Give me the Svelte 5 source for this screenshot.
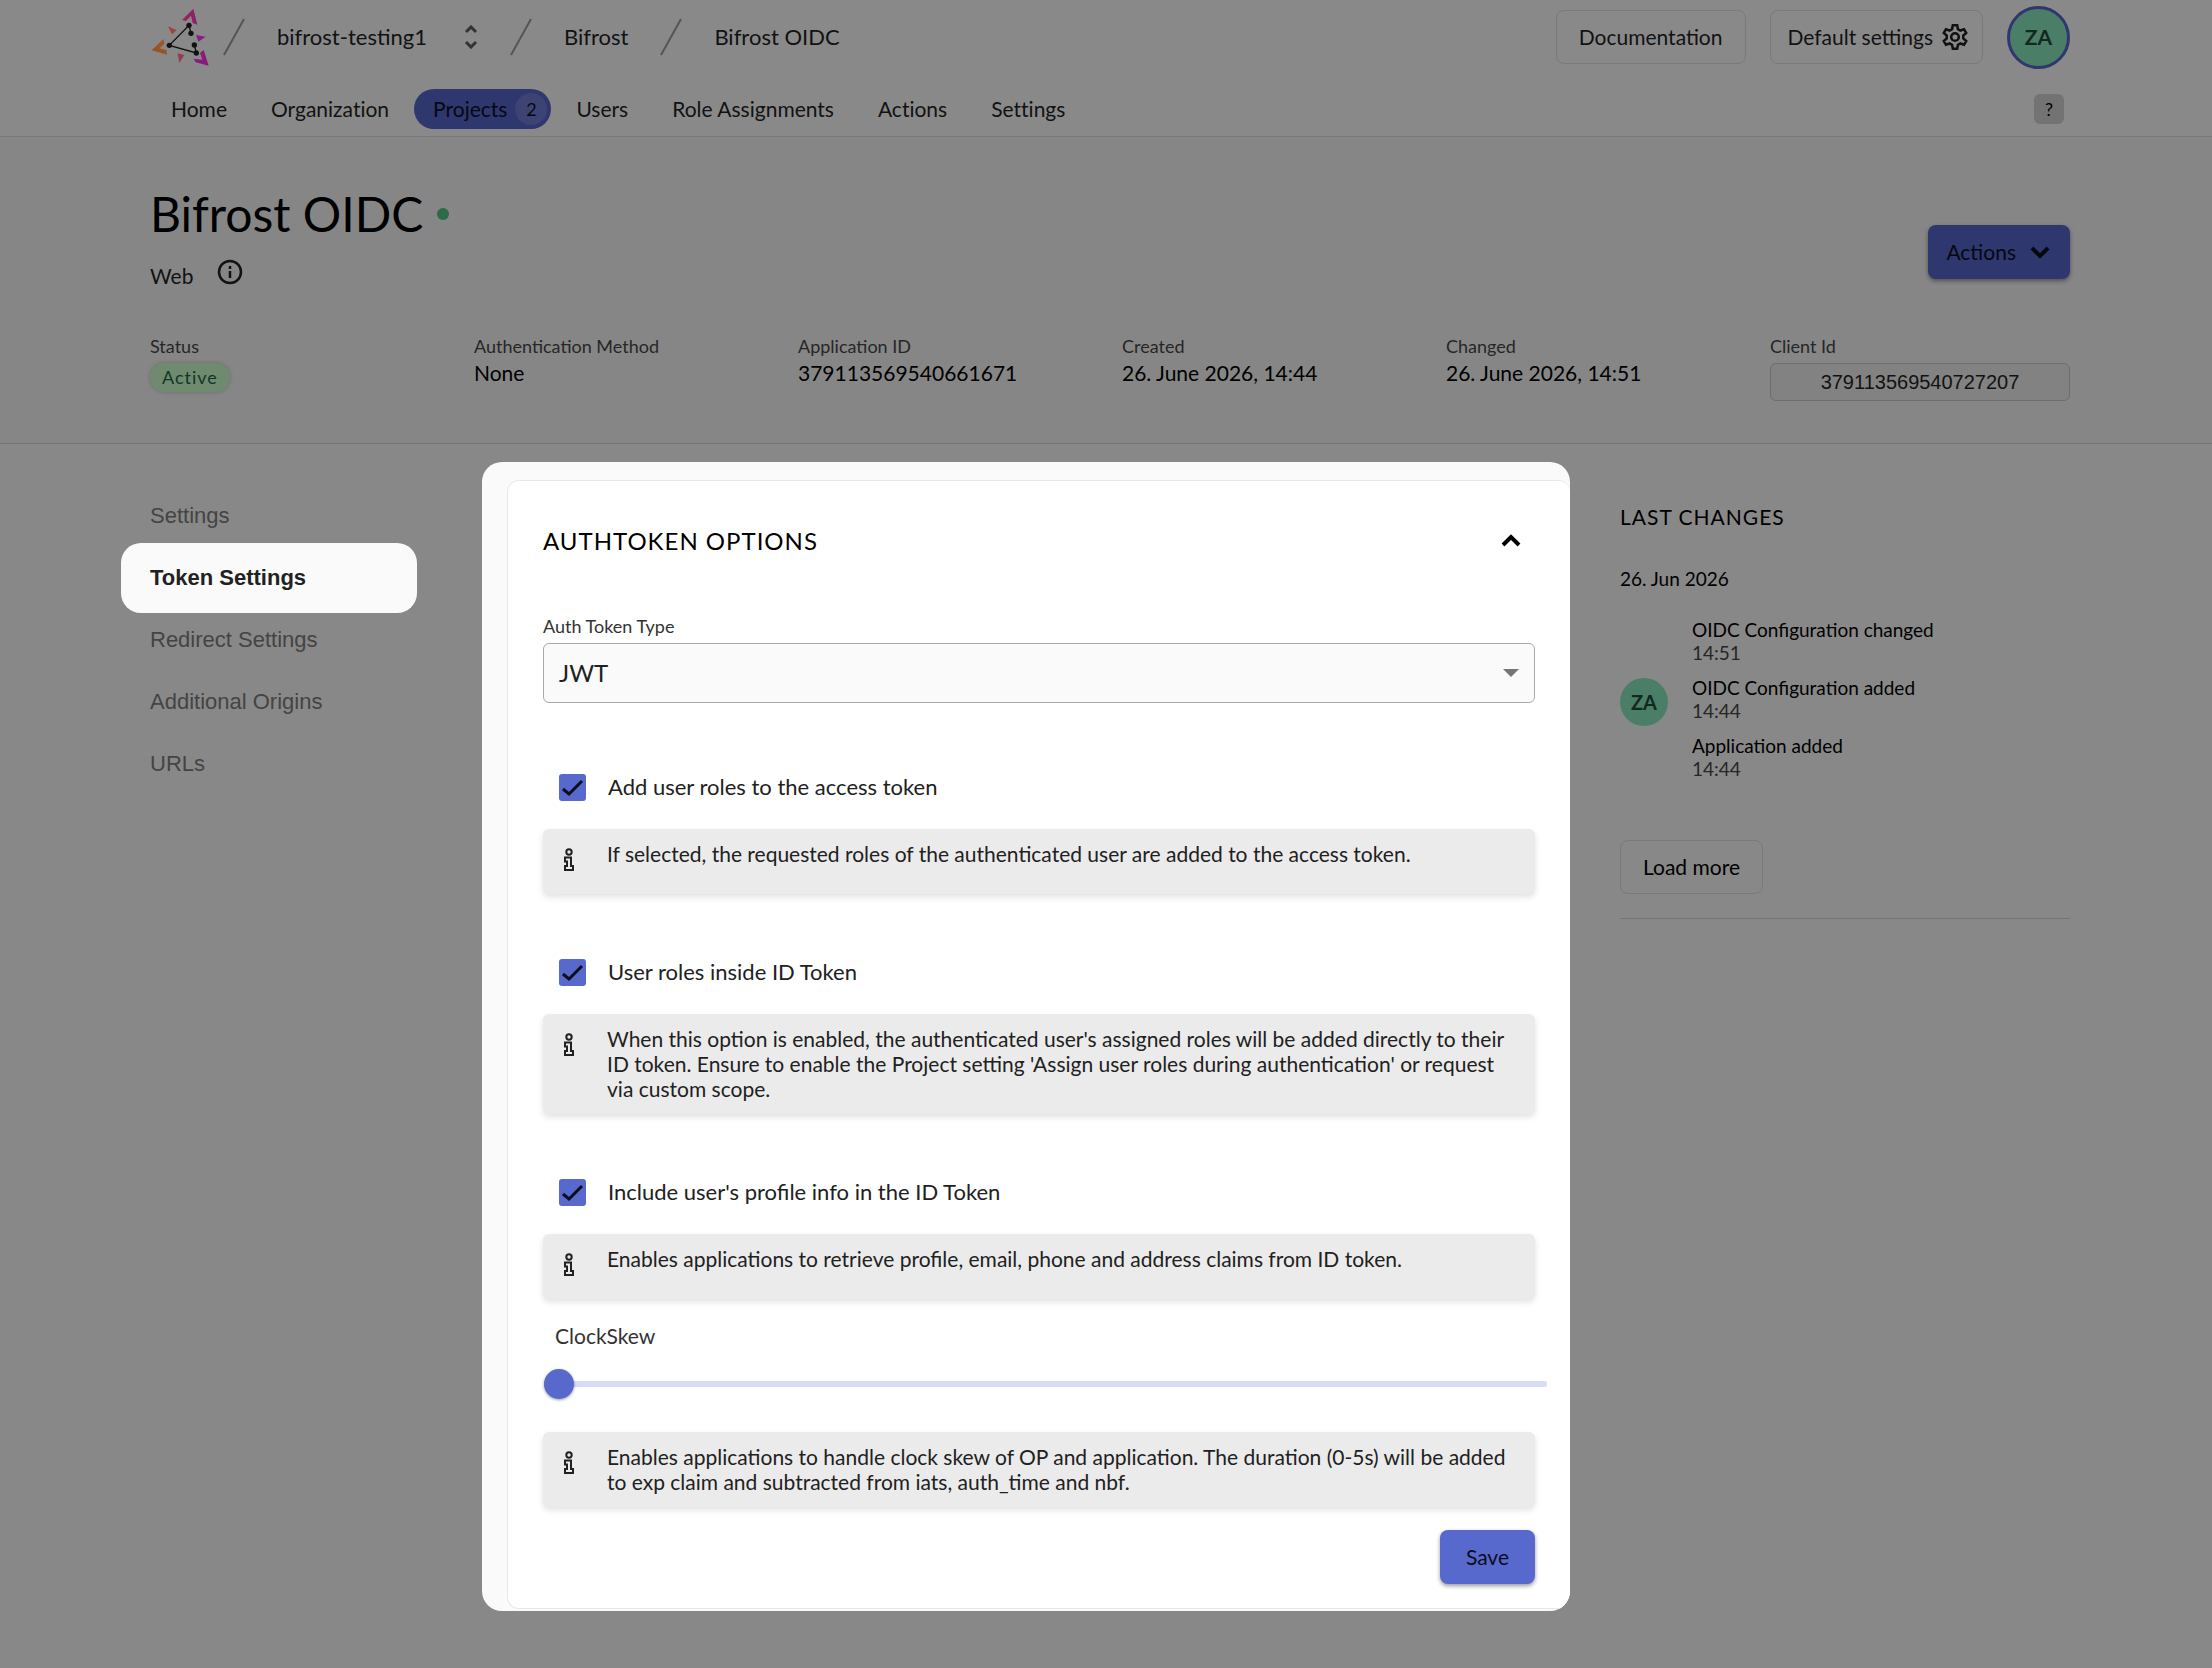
<script>
  const menu = [
    { name: 'Home' },
    { name: 'Organization' },
    { name: 'Projects', count: 2, active: true },
    { name: 'Users' },
    { name: 'Role Assignments' },
    { name: 'Actions' },
    { name: 'Settings' }
  ]

  const details = [
    { label: 'Authentication Method', value: 'None' },
    { label: 'Application ID', value: '379113569540661671' },
    { label: 'Created', value: '26. June 2026, 14:44' },
    { label: 'Changed', value: '26. June 2026, 14:51' }
  ]

  const sections = ['Settings', 'Token Settings', 'Redirect Settings', 'Additional Origins', 'URLs']
  let currentSection = $state('Token Settings')

  let options = $state([
    {
      id: 'access-roles',
      label: 'Add user roles to the access token',
      info: 'If selected, the requested roles of the authenticated user are added to the access token.',
      checked: true
    },
    {
      id: 'id-roles',
      label: 'User roles inside ID Token',
      info: "When this option is enabled, the authenticated user's assigned roles will be added directly to their ID token. Ensure to enable the Project setting 'Assign user roles during authentication' or request via custom scope.",
      checked: true
    },
    {
      id: 'id-profile',
      label: "Include user's profile info in the ID Token",
      info: 'Enables applications to retrieve profile, email, phone and address claims from ID token.',
      checked: true
    }
  ])

  const changes = [
    { text: 'OIDC Configuration changed', time: '14:51' },
    { text: 'OIDC Configuration added', time: '14:44' },
    { text: 'Application added', time: '14:44' }
  ]

  let tokenType = $state('JWT')
  let clockSkew = $state(0)
</script>

{#snippet slash()}
  <svg class="slash" width="22" height="38" viewBox="0 0 22 38" aria-hidden="true">
    <path d="M1 37 21 1" />
  </svg>
{/snippet}

{#snippet note(text)}
  <div class="note">
    <svg width="12" height="24" viewBox="0 0 12 24" aria-hidden="true">
      <circle cx="6" cy="4" r="2.7" />
      <path d="M2 9.500h6v8.500h2v4H2v-4h2v-4.500H2z" />
    </svg>
    <p>{text}</p>
  </div>
{/snippet}

<header class="header">
  <div class="top-row">
    <a class="logo" href="#home" aria-label="Home">
      <svg width="60" height="60" viewBox="30 21 180 180">
        <defs>
          <linearGradient id="warm" x1="0" y1="1" x2="1" y2="0">
            <stop offset="0" stop-color="#8d5520" />
            <stop offset="1" stop-color="#a3552c" />
          </linearGradient>
          <linearGradient id="pink" x1="0" y1="0" x2="1" y2="0">
            <stop offset="0" stop-color="#94294f" />
            <stop offset="1" stop-color="#8c1d72" />
          </linearGradient>
        </defs>
        <path fill="url(#pink)" d="M160 26 126 60l12 3 15-16 5 22 14 5z" />
        <path fill="url(#warm)" d="m35 151 35-34 3 14-14 14 21 6 1 13z" />
        <path fill="#8a1a7c" d="m206 197-15-47-11 9 7 20-26-3 6 11z" />
        <path fill="#9a4540" d="m84 79 26 12-14 12z" />
        <path fill="#8a1d80" d="m168 105 29 5-22 15z" />
        <path fill="#963a50" d="m113 160 20 5-15 24z" />
        <path fill="none" stroke="#111" stroke-width="4" d="m153 100-6-24-59 60 81 23-6-24" />
        <g fill="#111">
          <circle cx="147" cy="76" r="8" />
          <circle cx="153" cy="100" r="8" />
          <circle cx="88" cy="136" r="8" />
          <circle cx="163" cy="135" r="8" />
          <circle cx="169" cy="159" r="8" />
        </g>
      </svg>
    </a>
    <nav class="crumbs" aria-label="Breadcrumb">
      {@render slash()}
      <button class="org">
        bifrost-testing1
        <svg width="14" height="24" viewBox="0 0 14 24" aria-hidden="true">
          <path d="m2 7 5-5 5 5M2 17l5 5 5-5" />
        </svg>
      </button>
      {@render slash()}
      <a href="#bifrost">Bifrost</a>
      {@render slash()}
      <a href="#oidc">Bifrost OIDC</a>
    </nav>
    <div class="tools">
      <a class="stroked" href="#docs">Documentation</a>
      <button class="stroked settings">
        Default settings
        <svg width="28" height="28" viewBox="1 0 22 22" aria-hidden="true">
          <path d="M10.300 1.800h3.400l.6 3 1.900 1.100 2.900-1 1.700 3-2.300 2v2.200l2.300 2-1.700 3-2.900-1-1.900 1.100-.6 3h-3.400l-.6-3-1.900-1.100-2.900 1-1.700-3 2.300-2v-2.200l-2.300-2 1.700-3 2.900 1 1.900-1.100z" />
          <circle cx="12" cy="11" r="3" />
        </svg>
      </button>
      <button class="avatar me">ZA</button>
    </div>
  </div>

  <div class="nav-row">
    <nav class="menu" aria-label="Main">
      {#each menu as item}
        <a href="#{item.name}" class:active={item.active}>
          {item.name}
          {#if item.count}<span class="count">{item.count}</span>{/if}
        </a>
      {/each}
    </nav>
    <button class="help">?</button>
  </div>
</header>

<section class="app-info">
  <div class="app-head">
    <div>
      <h1>Bifrost OIDC <span class="dot"></span></h1>
      <div class="app-type">
        <span>Web</span>
        <a href="#info" aria-label="Info">
          <svg width="28" height="28" viewBox="0 0 28 28">
            <circle cx="14" cy="14" r="11" />
            <path d="M14 13v7M14 8v3" />
          </svg>
        </a>
      </div>
    </div>
    <button class="raised actions">
      Actions
      <svg width="20" height="14" viewBox="0 0 20 14" aria-hidden="true">
        <path d="m2 3 8 8 8-8" />
      </svg>
    </button>
  </div>

  <dl class="details">
    <div>
      <dt>Status</dt>
      <dd><span class="state">Active</span></dd>
    </div>
    {#each details as { label, value }}
      <div>
        <dt>{label}</dt>
        <dd>{value}</dd>
      </div>
    {/each}
    <div>
      <dt>Client Id</dt>
      <dd><button class="client-id">379113569540727207</button></dd>
    </div>
  </dl>
</section>

<main class="content">
  <nav class="sidenav" aria-label="Application">
    {#each sections as section}
      <button class:active={section === currentSection} onclick={() => (currentSection = section)}>
        {section}
      </button>
    {/each}
  </nav>

  <div class="spotlight">
    <form class="card" onsubmit={(e) => e.preventDefault()}>
      <div class="card-head">
        <h2>AUTHTOKEN OPTIONS</h2>
        <button type="button" class="collapse" aria-label="Collapse">
          <svg width="20" height="14" viewBox="0 0 20 14">
            <path d="m2 11 8-8 8 8" />
          </svg>
        </button>
      </div>

      <label class="field-label" for="token-type">Auth Token Type</label>
      <div class="select">
        <select id="token-type" bind:value={tokenType}>
          <option>JWT</option>
          <option>Bearer Token</option>
        </select>
        <svg width="16" height="8" viewBox="0 0 16 8" aria-hidden="true">
          <path d="M0 0h16L8 8z" />
        </svg>
      </div>

      {#each options as option}
        <label class="check" for={option.id}>
          <span class="box">
            <input type="checkbox" id={option.id} bind:checked={option.checked} />
            {#if option.checked}
              <svg width="27" height="27" viewBox="0 0 27 27" aria-hidden="true">
                <path d="m4 15 6 5L23 7" />
              </svg>
            {/if}
          </span>
          {option.label}
        </label>
        {@render note(option.info)}
      {/each}

      <label class="skew-label" for="clock-skew">ClockSkew</label>
      <input class="slider" type="range" id="clock-skew" min="0" max="5" bind:value={clockSkew} />
      {@render note('Enables applications to handle clock skew of OP and application. The duration (0-5s) will be added to exp claim and subtracted from iats, auth_time and nbf.')}

      <button class="raised save">Save</button>
    </form>
  </div>

  <aside class="changes">
    <h3>LAST CHANGES</h3>
    <p class="date">26. Jun 2026</p>
    <div class="group">
      <span class="avatar">ZA</span>
      <ul>
        {#each changes as change}
          <li>
            <span>{change.text}</span>
            <time>{change.time}</time>
          </li>
        {/each}
      </ul>
    </div>
    <button class="stroked">Load more</button>
  </aside>
</main>

<style>
:global(body) {
  background: #888888;
  color: #121212;
  font: 21px/28px Lato, "Liberation Sans", sans-serif;
}

h1, h2, h3, p, dl, dd, ul {
  margin: 0;
  padding: 0;
  font-weight: 400;
}

a {
  color: inherit;
  text-decoration: none;
}

button {
  padding: 0;
  border: 0;
  background: none;
  color: inherit;
  font: inherit;
  cursor: pointer;
}

svg {
  display: block;
  flex: none;
}

.stroked,
.raised {
  display: inline-flex;
  align-items: center;
  justify-content: center;
  box-sizing: border-box;
  height: 54px;
  border-radius: 8px;
}

.stroked {
  padding: 0 22px;
  border: 1px solid #7a7a7a;
}

.avatar {
  display: flex;
  align-items: center;
  justify-content: center;
  flex: none;
  box-sizing: border-box;
  width: 48px;
  height: 48px;
  border-radius: 50%;
  background: #4b7e66;
  color: #12291f;
  font-size: 20px;
  font-weight: 700;
}

/* header */

.header {
  border-bottom: 1px solid #777777;
  background: #898989;
}

.top-row {
  display: flex;
  align-items: center;
  height: 74px;
  padding: 0 142px 0 150px;
}

.logo {
  margin-right: 13px;
}

.crumbs {
  display: flex;
  align-items: center;
  gap: 32px;
  font-size: 22px;
}

.slash {
  fill: none;
  stroke: #555555;
  stroke-width: 2;
}

.org {
  display: flex;
  align-items: center;
  gap: 37px;
}

.org svg {
  fill: none;
  stroke: #333333;
  stroke-width: 3;
}

.tools {
  display: flex;
  align-items: center;
  gap: 24px;
  margin-left: auto;
}

.settings {
  gap: 8px;
  padding: 0 13px 0 17px;
}

.settings svg {
  fill: none;
  stroke: #121212;
  stroke-width: 2;
}

.avatar.me {
  width: 63px;
  height: 63px;
  border: 3px solid #30376f;
  font-size: 21px;
}

.nav-row {
  display: flex;
  align-items: center;
  justify-content: space-between;
  padding: 15px 148px 7px 152px;
}

.menu {
  display: flex;
  gap: 6px;
  font-variant-ligatures: none;
}

.menu a {
  display: flex;
  align-items: center;
  gap: 8px;
  height: 40px;
  padding: 0 19px;
  border-radius: 20px;
}

.menu .active {
  padding-right: 4px;
  background: #2f376f;
  color: #060810;
}

.count {
  width: 32px;
  border-radius: 16px;
  background: #3d4474;
  font-size: 18px;
  line-height: 32px;
  text-align: center;
}

.help {
  width: 30px;
  height: 30px;
  border-radius: 6px;
  background: #737373;
  color: #000000;
  font-size: 18px;
}

/* application summary */

.app-info {
  padding: 47px 142px 42px 150px;
  border-bottom: 1px solid #757575;
  background: #868686;
}

.app-head {
  display: flex;
  align-items: flex-start;
  justify-content: space-between;
}

h1 {
  display: flex;
  align-items: center;
  gap: 14px;
  color: #000000;
  font-size: 48px;
  line-height: 60px;
}

.dot {
  width: 12px;
  height: 12px;
  border-radius: 50%;
  background: #2d6a49;
}

.app-type {
  display: flex;
  gap: 23px;
  margin-top: 12px;
  line-height: 40px;
}

.app-type a {
  padding-top: 2px;
}

.app-type svg {
  fill: none;
  stroke: #121212;
  stroke-width: 2.5;
}

.raised {
  background: #5769cd;
  color: #0b0e1c;
  box-shadow: 0 2px 4px rgba(0, 0, 0, 0.4);
}

.raised.actions {
  gap: 14px;
  margin-top: 41px;
  padding: 0 20px 0 18px;
  background: #2f376f;
  color: #060810;
}

.actions svg {
  fill: none;
  stroke: currentColor;
  stroke-width: 4;
}

.details {
  display: grid;
  grid-template-columns: repeat(6, 1fr);
  gap: 24px;
  margin-top: 37px;
}

dt {
  color: #262626;
  font-size: 18px;
  line-height: 26px;
}

dd {
  color: #000000;
}

.state {
  display: block;
  width: fit-content;
  margin-top: 4px;
  padding: 0 12px;
  border-radius: 15px;
  background: #6f8a6e;
  box-shadow: 0 0 4px rgba(0, 0, 0, 0.2);
  color: #12352a;
  font-size: 18px;
  line-height: 29px;
  letter-spacing: 1px;
}

.client-id {
  display: block;
  width: 100%;
  height: 38px;
  margin-top: 4px;
  border: 1px solid #6c6d70;
  border-radius: 6px;
  background: #828282;
  color: #121212;
  font-family: "Liberation Sans", Arial, sans-serif;
  font-size: 20px;
}

/* main area */

.content {
  display: grid;
  grid-template-columns: 296px 1fr 450px;
  align-items: start;
  padding: 18px 142px 56px 121px;
}

.sidenav {
  display: flex;
  flex-direction: column;
  padding-top: 23px;
}

.sidenav button {
  height: 62px;
  padding: 0 29px;
  color: #444444;
  font-family: "Liberation Sans", Arial, sans-serif;
  font-size: 22px;
  text-align: left;
}

.sidenav .active {
  height: 70px;
  margin: -4px 0;
  border-radius: 20px;
  background: #fafafa;
  color: #212121;
  font-weight: 700;
}

.spotlight {
  margin: 0 50px 0 65px;
  padding: 18px 0 2px 25px;
  border-radius: 20px;
  background: #fafafa;
  overflow: hidden;
}

.card {
  display: flex;
  flex-direction: column;
  padding: 30px 35px 24px;
  border: 1px solid #e8e8e8;
  border-right: 0;
  border-radius: 12px;
  background: #ffffff;
}

.card-head {
  display: flex;
  align-items: center;
  justify-content: space-between;
  height: 60px;
  margin-bottom: 43px;
  padding-right: 14px;
}

h2 {
  color: #000000;
  font-size: 24px;
  letter-spacing: 1px;
}

.collapse svg {
  fill: none;
  stroke: #000000;
  stroke-width: 4;
}

.field-label {
  margin-bottom: 5px;
  color: #333333;
  font-size: 18px;
  line-height: 24px;
}

.select {
  display: grid;
  align-items: center;
  margin-bottom: 6px;
}

.select select,
.select svg {
  grid-area: 1 / 1;
}

.select select {
  height: 60px;
  padding: 0 15px;
  border: 1px solid #a9a9a9;
  border-radius: 6px;
  background: #fafafa;
  color: #212121;
  font: inherit;
  font-size: 24px;
  appearance: none;
}

.select svg {
  justify-self: end;
  margin-right: 16px;
  fill: #757575;
  pointer-events: none;
}

.check {
  display: flex;
  align-items: center;
  gap: 22px;
  height: 40px;
  margin: 58px 0 22px;
  padding-left: 16px;
  color: #212121;
  font-size: 22px;
}

.box {
  display: grid;
}

.box input,
.box svg {
  grid-area: 1 / 1;
}

.box input {
  width: 27px;
  height: 27px;
  margin: 0;
  border: 2px solid #757575;
  border-radius: 3px;
  appearance: none;
}

.box input:checked {
  border-color: #5769cd;
  background: #5769cd;
}

.box svg {
  fill: none;
  stroke: #0b0e1c;
  stroke-width: 3;
  pointer-events: none;
}

.note {
  display: flex;
  gap: 32px;
  min-height: 40px;
  padding: 12px 24px 13px 20px;
  border-radius: 6px;
  background: #ebebeb;
  box-shadow: 0 3px 6px rgba(0, 0, 0, 0.12);
  color: #212121;
  line-height: 25px;
}

.note svg {
  margin-top: 7px;
  fill: none;
  stroke: #212121;
  stroke-width: 2;
}

.skew-label {
  margin-top: 22px;
  padding-left: 12px;
  color: #333333;
  line-height: 30px;
}

.slider {
  height: 30px;
  margin: 18px -12px 33px 1px;
  background: none;
  appearance: none;
}

.slider::-webkit-slider-runnable-track {
  height: 6px;
  border-radius: 3px;
  background: #d7dbf4;
}

.slider::-webkit-slider-thumb {
  width: 30px;
  height: 30px;
  margin-top: -12px;
  border-radius: 50%;
  background: #5769cd;
  box-shadow: 0 1px 3px rgba(0, 0, 0, 0.4);
  appearance: none;
}

.save {
  align-self: flex-end;
  margin-top: 23px;
  padding: 0 26px;
}

/* last changes */

.changes {
  padding: 40px 0 24px;
  border-bottom: 1px solid #757575;
  color: #000000;
}

h3 {
  font-size: 21px;
  line-height: 30px;
  letter-spacing: 1px;
}

.date {
  margin: 35px 0 24px;
  font-size: 19px;
  line-height: 24px;
}

.group {
  display: flex;
  align-items: center;
  gap: 24px;
  margin-bottom: 51px;
  font-size: 19px;
  line-height: 23px;
}

.group li {
  display: flex;
  flex-direction: column;
  padding: 3px 0 9px;
}

time {
  color: #262626;
}
</style>
